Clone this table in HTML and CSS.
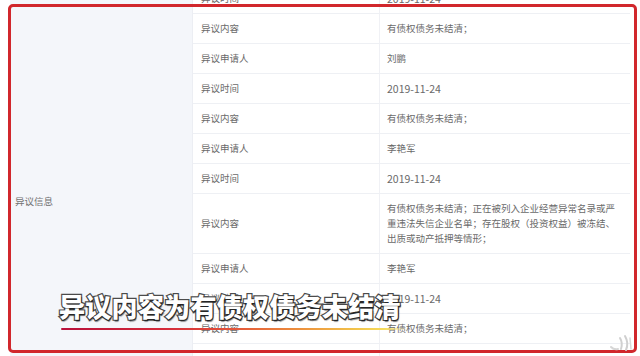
FILE: index.html
```html
<!DOCTYPE html>
<html lang="zh-CN">
<head>
<meta charset="utf-8">
<title>异议信息</title>
<link rel="stylesheet" href="styles.css">
</head>
<body>
<div class="screen">
  <div class="table">
    <div class="group-label">异议信息</div>
    <div class="rows">
      <div class="row"><div class="k">异议时间</div><div class="v num">2019-11-24</div></div>
      <div class="row"><div class="k">异议内容</div><div class="v">有债权债务未结清；</div></div>
      <div class="row"><div class="k">异议申请人</div><div class="v">刘鹏</div></div>
      <div class="row"><div class="k">异议时间</div><div class="v num">2019-11-24</div></div>
      <div class="row"><div class="k">异议内容</div><div class="v">有债权债务未结清；</div></div>
      <div class="row"><div class="k">异议申请人</div><div class="v">李艳军</div></div>
      <div class="row"><div class="k">异议时间</div><div class="v num">2019-11-24</div></div>
      <div class="row"><div class="k">异议内容</div><div class="v">有债权债务未结清；正在被列入企业经营异常名录或严重违法失信企业名单；存在股权（投资权益）被冻结、出质或动产抵押等情形；</div></div>
      <div class="row"><div class="k">异议申请人</div><div class="v">李艳军</div></div>
      <div class="row"><div class="k">异议时间</div><div class="v num">2019-11-24</div></div>
      <div class="row"><div class="k">异议内容</div><div class="v">有债权债务未结清；</div></div>
      <div class="row row-empty"><div class="k"></div><div class="v"></div></div>
    </div>
  </div>
  <div class="frame"></div>
  <div class="caption">异议内容为有债权债务未结清</div>
  <div class="caption-line"></div>
  <svg class="sound-icon" width="26" height="18" viewBox="0 0 26 18">
    <path d="M3 13 Q6 16 10 15" fill="none" stroke="#d6d6d6" stroke-width="2" stroke-linecap="round"/>
    <path d="M12 4 Q15 9 13 15" fill="none" stroke="#d0d0d0" stroke-width="2" stroke-linecap="round"/>
    <path d="M17 2 Q21 9 18 16" fill="none" stroke="#cfcfcf" stroke-width="2" stroke-linecap="round"/>
    <path d="M22 4 L23 15" fill="none" stroke="#d8d8d8" stroke-width="1.5" stroke-linecap="round"/>
  </svg>
</div>
</body>
</html>
```
FILE: styles.css
```css
html, body {
  margin: 0;
  padding: 0;
  background: #ffffff;
}

.screen {
  position: relative;
  width: 640px;
  height: 356px;
  overflow: hidden;
  background: #ffffff;
  font-family: "Noto Sans CJK SC", "Noto Sans", sans-serif;
}

.table {
  display: flex;
  margin: -16px 10px 0 10px;
  font-size: 9.5px;
  line-height: 15px;
  color: #6a6a6a;
}

.group-label {
  width: 183px;
  flex: none;
  box-sizing: border-box;
  padding: 209.5px 0 0 5px;
  background: #f4f6fa;
  border-right: 1px solid #eceef3;
  color: #707070;
}

.rows {
  flex: 1;
  background: #ffffff;
}

.row {
  display: grid;
  grid-template-columns: 187px 1fr;
  border-bottom: 1px solid #eef0f4;
}

.row-empty {
  height: 30px;
}

.k {
  padding: 7px 0 7px 8px;
  border-right: 1px solid #f0f1f5;
  box-sizing: border-box;
  display: flex;
  align-items: center;
}

.v {
  padding: 7px 12px 7px 7px;
}

.num {
  font-size: 10.5px;
}

.frame {
  position: absolute;
  left: 8px;
  top: 4px;
  right: 3px;
  bottom: 3px;
  border: 3px solid #d1272c;
  border-radius: 5px;
}

.caption {
  position: absolute;
  left: 59px;
  top: 292px;
  font-family: "Noto Sans CJK SC", sans-serif;
  font-size: 26px;
  line-height: 28px;
  font-weight: 900;
  letter-spacing: 0.3px;
  color: #ffffff;
  -webkit-text-stroke: 2.4px #4b4b4b;
  paint-order: stroke fill;
  text-shadow: 1px 2px 1px rgba(0, 0, 0, 0.5);
  white-space: nowrap;
}

.caption-line {
  position: absolute;
  left: 61px;
  top: 328px;
  width: 345px;
  height: 2px;
  border-radius: 1px;
  background: linear-gradient(90deg, #b8103a 0%, #d42a3a 30%, #e3553a 50%, #ec8c3c 68%, #f2c24a 85%, #f6dc5c 94%, rgba(246, 220, 92, 0) 100%);
}

.sound-icon {
  position: absolute;
  left: 608px;
  top: 334px;
}
```
